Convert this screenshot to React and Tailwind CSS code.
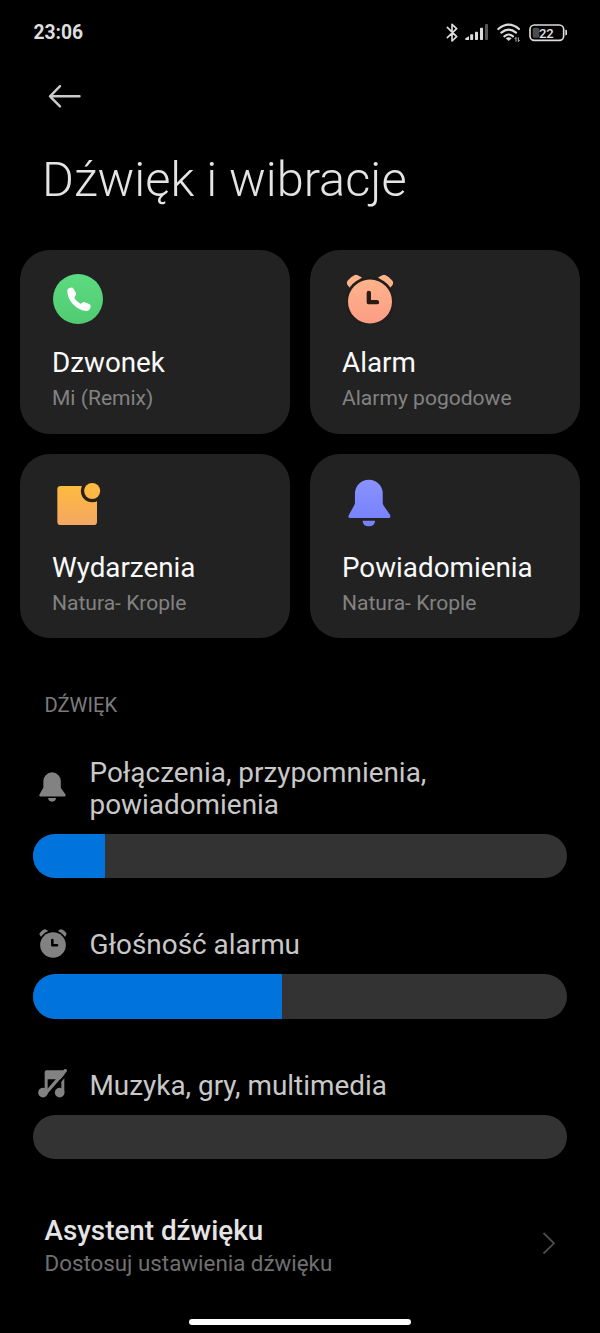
function StatusIcons() {
  return (
    <svg className="block h-[24px] w-[124px]" viewBox="48 30 372 72" fill="none" aria-hidden="true">
      <path d="M52 49L80 77L66 90V40L80 53L52 80" stroke="#dcdcdc" strokeWidth="5" strokeLinejoin="round" strokeLinecap="round" />
      <g fill="#dcdcdc">
        <path d="M106 87v-5l11-6v11z" />
        <rect x="120.500" y="70" width="9" height="17" rx="2" />
        <rect x="135" y="62" width="9" height="25" rx="2" />
        <rect x="150" y="50" width="9" height="37" rx="2" />
      </g>
      <rect x="165" y="39" width="9" height="48" rx="2" fill="#555" />
      <g stroke="#dcdcdc" strokeWidth="6.500" strokeLinecap="round">
        <path d="M205 54Q236 28 267 54" />
        <path d="M214 65Q236 47 258 65" />
        <path d="M223 76Q236 65 249 76" />
      </g>
      <path d="M227 82Q236 75 245 82L236 90Z" fill="#dcdcdc" />
      <path d="M258 92V79M254 84L258 79M265 79V92M269 87L265 92" stroke="#b5b5b5" strokeWidth="3" />
      <rect x="300" y="42" width="101" height="46" rx="13" stroke="#dcdcdc" strokeWidth="5" />
      <rect x="308" y="50" width="20" height="30" rx="5" fill="#4c4c4c" />
      <path d="M406 56h1q4 0 4 4v9q0 4-4 4h-1z" fill="#dcdcdc" />
      <text x="349" y="79.500" textAnchor="middle" fill="#e4e4e4" fontSize="39" fontWeight="500" fontFamily="Roboto, sans-serif">22</text>
    </svg>
  );
}

function PhoneIcon() {
  return (
    <svg className="block h-[50px] w-[50px]" viewBox="128 102 150 150" aria-hidden="true">
      <defs>
        <linearGradient id="phone-fill" x1="0" y1="0" x2="0" y2="1">
          <stop offset="0" stopColor="#5ddb80" />
          <stop offset="1" stopColor="#50cb72" />
        </linearGradient>
      </defs>
      <circle cx="203" cy="177" r="75" fill="url(#phone-fill)" />
      <path fill="#fff" d="M171 152Q171 146 177 144L182 143Q187 142 190 147L197 159Q199 163 195 167L193 171Q191 174 194 177Q201 185 208 190Q211 193 213 190L216 188Q219 185 224 187L238 193Q242 196 241 201L238 208Q235 213 229 213Q206 212 188 193Q171 175 171 152Z" />
    </svg>
  );
}

function AlarmIcon({ className, fill, hand, back }) {
  return (
    <svg className={className} viewBox="138 104 144 149" aria-hidden="true">
      <defs>
        <linearGradient id="alarm-fill" gradientUnits="userSpaceOnUse" x1="0" y1="104" x2="0" y2="253">
          <stop offset="0" stopColor="#ffb68a" />
          <stop offset="1" stopColor="#fc9d86" />
        </linearGradient>
      </defs>
      <g fill={fill}>
        <path d="M141 134Q139 127 144 122Q152 112 163 107Q168 104 173 107L186 114L149 145Z" />
        <path d="M279 134Q281 127 276 122Q268 112 257 107Q252 104 247 107L234 114L271 145Z" />
      </g>
      <circle cx="210" cy="186" r="74" fill={back} />
      <circle cx="210" cy="186" r="66" fill={fill} />
      <path d="M206.500 160V188H231" fill="none" stroke={hand} strokeWidth="13" strokeLinecap="round" strokeLinejoin="round" />
    </svg>
  );
}

function EventIcon() {
  return (
    <svg className="block h-[43px] w-[44px]" viewBox="141 98 132 129" aria-hidden="true">
      <defs>
        <linearGradient id="event-fill" gradientUnits="userSpaceOnUse" x1="0" y1="97" x2="0" y2="226">
          <stop offset="0" stopColor="#ffbc3c" />
          <stop offset="1" stopColor="#f3a762" />
        </linearGradient>
        <clipPath id="event-sheet">
          <rect x="141" y="107" width="121" height="117" rx="10" />
        </clipPath>
      </defs>
      <rect x="142" y="107" width="119" height="117" rx="10" fill="url(#event-fill)" />
      <rect x="250" y="104" width="14" height="20" fill="#222" />
      <circle cx="246.500" cy="122" r="34" fill="#292014" clipPath="url(#event-sheet)" />
      <circle cx="246.500" cy="122" r="24" fill="url(#event-fill)" />
    </svg>
  );
}

function BellIcon({ className, fill }) {
  return (
    <svg className={className} viewBox="144 87 130 143" aria-hidden="true">
      <defs>
        <linearGradient id="bell-fill" gradientUnits="userSpaceOnUse" x1="0" y1="87" x2="0" y2="230">
          <stop offset="0" stopColor="#8a92ff" />
          <stop offset="1" stopColor="#7480fb" />
        </linearGradient>
      </defs>
      <path fill={fill} d="M165 130A42 42 0 0 1 249 130V158Q249 163 252 167L271 194Q275 204 266 204H151Q142 204 147 194L162 167Q165 163 165 158Z" />
      <path fill={fill} d="M188 212H226Q225 229 207 229Q189 229 188 212Z" />
    </svg>
  );
}

function MusicOffIcon() {
  return (
    <svg className="block h-[29px] w-[29px]" viewBox="56 41 87 87" aria-hidden="true">
      <g fill="#828282">
        <circle cx="71" cy="112" r="14.500" />
        <circle cx="121" cy="112" r="14.500" />
        <path fillRule="evenodd" d="M76 50Q76 45 81 45H135V112H126V72H85V112H76Z" />
      </g>
      <path d="M148 49L88 117" stroke="#000" strokeWidth="7" />
      <path d="M138 46L80 113" stroke="#828282" strokeWidth="10" strokeLinecap="round" />
    </svg>
  );
}

const small = "#828282";

const cards = [
  { title: "Dzwonek", sub: "Mi (Remix)", icon: <PhoneIcon />, place: "pl-[1px] pt-0" },
  {
    title: "Alarm",
    sub: "Alarmy pogodowe",
    icon: <AlarmIcon className="block h-[50px] w-[48px]" fill="url(#alarm-fill)" hand="#2b1b15" back="#221e1c" />,
    place: "pl-[4px] pt-0",
  },
  { title: "Wydarzenia", sub: "Natura- Krople", icon: <EventIcon />, place: "pl-[5px] pt-[4.500px]" },
  {
    title: "Powiadomienia",
    sub: "Natura- Krople",
    icon: <BellIcon className="block h-[48px] w-[43px]" fill="url(#bell-fill)" />,
    place: "pl-[6px] pt-[0.500px]",
  },
];

const sliders = [
  {
    label: "Połączenia, przypomnienia, powiadomienia",
    icon: <BellIcon className="block h-[30px] w-[27px]" fill={small} />,
    value: 13.4,
  },
  {
    label: "Głośność alarmu",
    icon: <AlarmIcon className="block h-[29px] w-[28px]" fill={small} hand="#000" back="#000" />,
    value: 46.7,
  },
  { label: "Muzyka, gry, multimedia", icon: <MusicOffIcon />, value: 0 },
];

function SoundCard({ title, sub, icon, place }) {
  return (
    <button className="flex h-[184.500px] flex-col rounded-[30px] bg-[#222222] pl-8 pt-[24.600px] text-left">
      <span className={`block h-[73.100px] ${place}`}>{icon}</span>
      <span className="text-[27.800px] leading-8 text-[#fafafa]">{title}</span>
      <span className="mt-[7px] text-[21.050px] leading-6 text-[#828282]">{sub}</span>
    </button>
  );
}

function VolumeSlider({ label, icon, value }) {
  return (
    <div>
      <div className="flex items-center pb-[13px]">
        <span className="-mt-[4px] flex w-[39px] justify-center">{icon}</span>
        <span className="ml-[17.500px] w-[360px] text-[27.900px] leading-8 text-[#c8c8c8]">{label}</span>
      </div>
      <div className="h-[44.500px] overflow-hidden rounded-full bg-[#333333]">
        <div className="h-full bg-[#0073dd]" style={{ width: `${value}%` }} />
      </div>
    </div>
  );
}

export default function App() {
  return (
    <main className="flex h-[1333px] w-[600px] flex-col overflow-hidden bg-black font-['Roboto',sans-serif]">
      <header className="flex h-[65px] items-center justify-between pl-[33.500px] pr-[30px]">
        <span className="text-[19.300px] font-bold leading-6 text-[#dedede]">23:06</span>
        <StatusIcons />
      </header>
      <button className="ml-[48px] mt-[19px] block h-[24px] w-[34px]" aria-label="Wstecz">
        <svg className="block h-[24px] w-[34px]" viewBox="0 0 34 24" fill="none" stroke="#cfcaca" strokeWidth="2.400" strokeLinecap="round" strokeLinejoin="round" aria-hidden="true">
          <path d="M12 2.200L2 12.300L12 22.300M2 12.300H31.500" />
        </svg>
      </button>
      <h1 className="ml-[42px] mt-[43.500px] text-[48.700px] font-light leading-[56px] text-[#e4e4e4]">Dźwięk i wibracje</h1>
      <section className="mx-5 mt-[42px] grid grid-cols-2 gap-x-5 gap-y-[19.900px]">
        {cards.map((card) => (
          <SoundCard key={card.title} {...card} />
        ))}
      </section>
      <h2 className="ml-[44.500px] mt-[54.600px] text-[20.200px] leading-6 text-[#7c7c7c]">DŹWIĘK</h2>
      <section className="mx-[33px] mt-[40px] flex flex-col gap-[50.900px]">
        {sliders.map((slider) => (
          <VolumeSlider key={slider.label} {...slider} />
        ))}
      </section>
      <button className="ml-[44.500px] mr-[44px] mt-[55.500px] flex items-center justify-between text-left">
        <span className="flex flex-col">
          <span className="text-[27.800px] font-medium leading-8 text-[#e4e4e4]">Asystent dźwięku</span>
          <span className="mt-[4px] text-[22.350px] leading-6 text-[#707070]">Dostosuj ustawienia dźwięku</span>
        </span>
        <svg className="mb-[3px] h-[24px] w-[14px]" viewBox="0 0 14 24" fill="none" stroke="#4c4c4c" strokeWidth="1.800" aria-hidden="true">
          <path d="M1.500 2L12 12.300L1.500 22.500" />
        </svg>
      </button>
      <div className="mb-[8.500px] ml-[189px] mt-auto h-[6px] w-[222px] rounded-full bg-white" />
    </main>
  );
}
